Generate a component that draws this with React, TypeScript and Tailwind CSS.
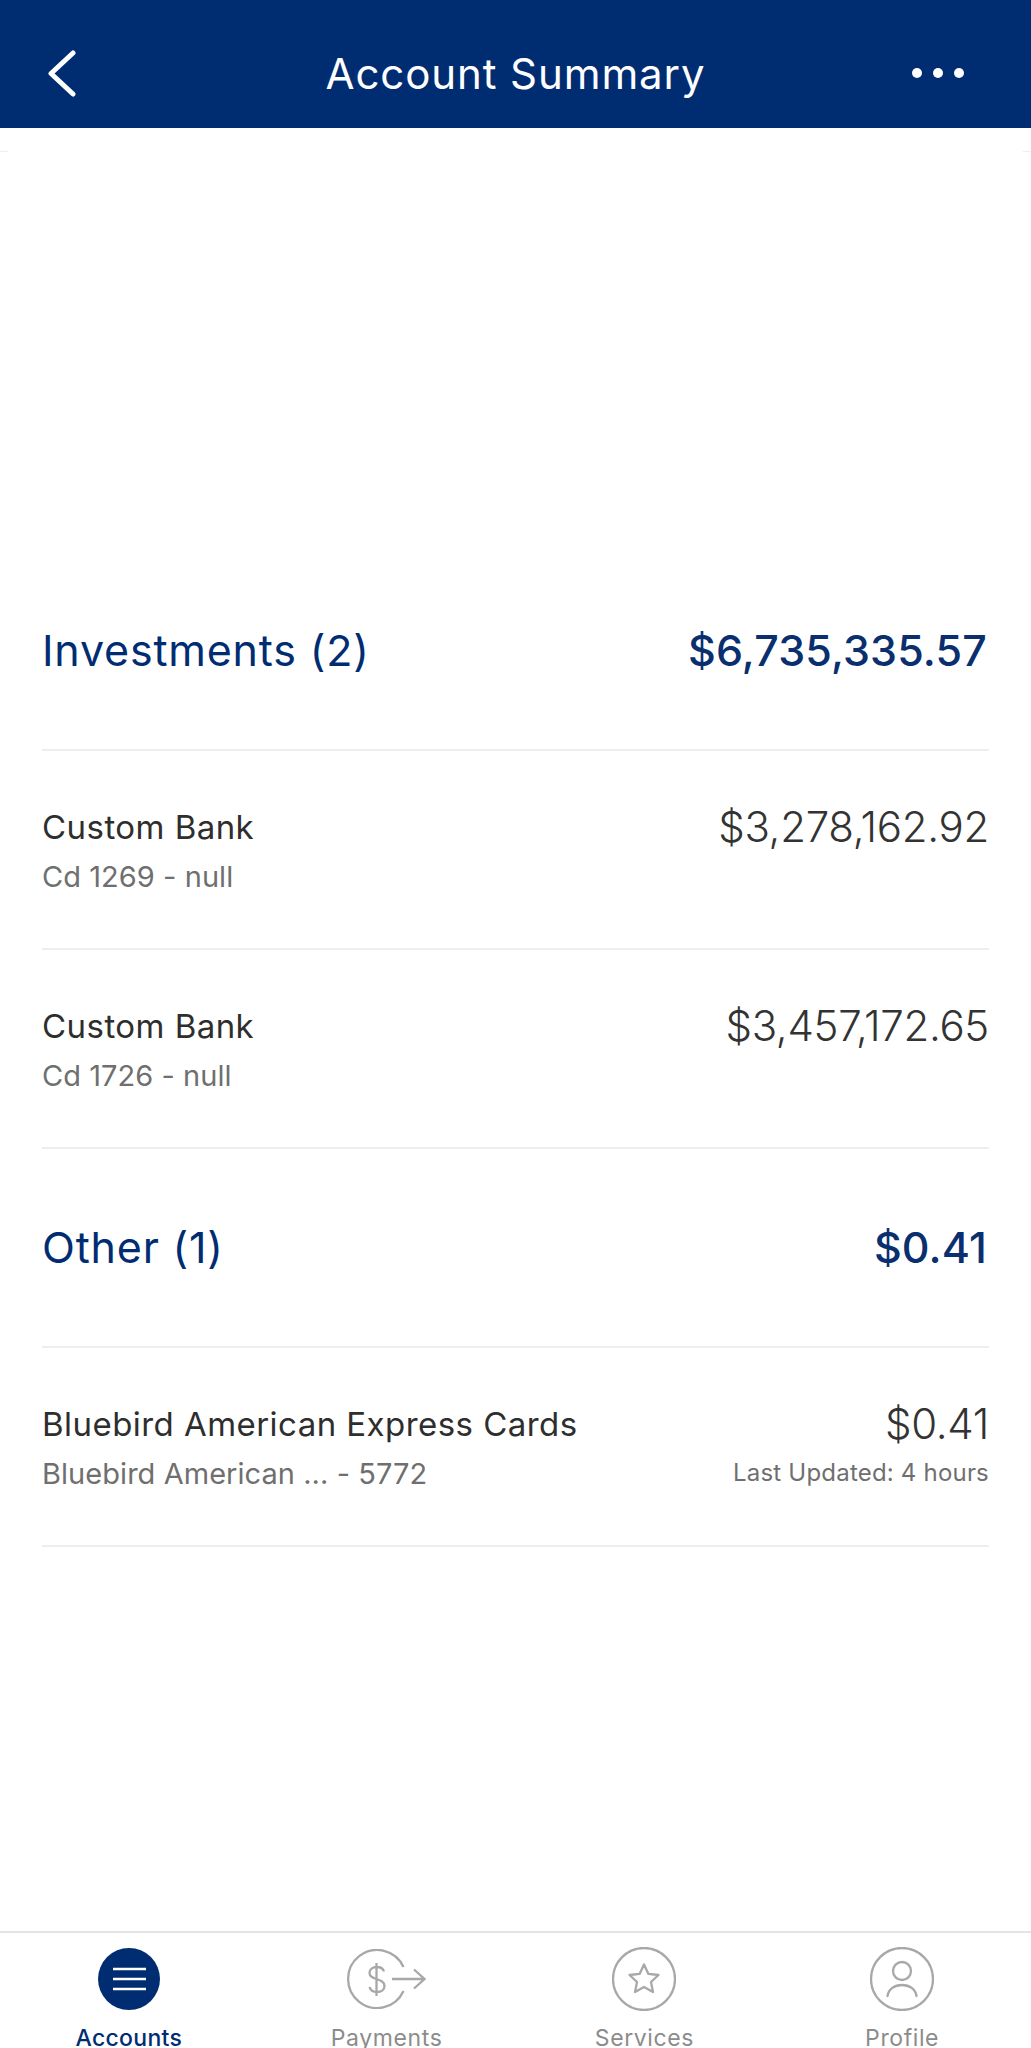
const font = "font-['Inter','Liberation_Sans',sans-serif]"

function SectionRow({ title, total }: { title: string; total: string }) {
    return (
        <div className="flex h-[199px] items-center justify-between border-b-2 border-[#eeeeee]">
            <span className="text-[43px] font-normal tracking-[0.8px] text-[#002d72]">{title}</span>
            <span className="mr-[2px] text-[43px] font-medium tracking-[0.15px] text-[#0a2f6e]">{total}</span>
        </div>
    )
}

function AccountRow({ name, sub, amount, note }: { name: string; sub: string; amount: string; note?: string }) {
    return (
        <div className="flex h-[199px] justify-between border-b-2 border-[#eeeeee] pt-[52px]">
            <div>
                <div className="text-[33px] leading-[48px] font-normal tracking-[0.45px] text-[#2e2e2e]">{name}</div>
                <div className="mt-[4px] text-[29px] leading-[44px] tracking-[0.05px] text-[#6f6f6f]">{sub}</div>
            </div>
            <div className="text-right">
                <div className="text-[42px] leading-[48px] font-light tracking-[-0.3px] text-[#333333]">{amount}</div>
                {note && <div className="mt-[3px] text-[24px] leading-[44px] tracking-[0.2px] text-[#6f6f6f]">{note}</div>}
            </div>
        </div>
    )
}

function Tab({ label, active, children }: { label: string; active?: boolean; children: React.ReactNode }) {
    return (
        <div className="flex flex-col items-center">
            <div className="flex h-[64px] items-center justify-center">{children}</div>
            <span className={`mt-[17px] text-[23px] leading-[20px] ${active ? 'font-medium tracking-[0.3px] text-[#002d72]' : 'tracking-[0.6px] text-[#8c8c8c]'}`}>
                {label}
            </span>
        </div>
    )
}

export default function App() {
    return (
        <div className={`flex h-[2048px] w-[1031px] flex-col overflow-hidden bg-white ${font}`}>
            <header className="grid h-[128px] grid-cols-[1fr_auto_1fr] items-center bg-[#002d72] px-[48px] pt-[18px] text-white">
                <svg width="28" height="47" viewBox="0 0 28 47" fill="none" stroke="white" strokeWidth="5" strokeLinecap="round" strokeLinejoin="round">
                    <path d="M25 3 3 23.5 25 44" />
                </svg>
                <h1 className="text-[42px] font-normal tracking-[0.9px]">Account Summary</h1>
                <div className="mr-[19px] flex justify-end gap-[11px]">
                    <span className="size-[10px] rounded-full bg-white" />
                    <span className="size-[10px] rounded-full bg-white" />
                    <span className="size-[10px] rounded-full bg-white" />
                </div>
            </header>

            <div className="flex h-[424px] justify-between pt-[23px]">
                <span className="h-px w-[8px] bg-[#eeeeee]" />
                <span className="h-px w-[8px] bg-[#eeeeee]" />
            </div>

            <main className="flex-1 px-[42px]">
                <SectionRow title="Investments (2)" total="$6,735,335.57" />
                <AccountRow name="Custom Bank" sub="Cd 1269 - null" amount="$3,278,162.92" />
                <AccountRow name="Custom Bank" sub="Cd 1726 - null" amount="$3,457,172.65" />
                <SectionRow title="Other (1)" total="$0.41" />
                <AccountRow
                    name="Bluebird American Express Cards"
                    sub="Bluebird American ... - 5772"
                    amount="$0.41"
                    note="Last Updated: 4 hours"
                />
            </main>

            <nav className="grid h-[117px] shrink-0 grid-cols-4 border-t-2 border-[#e4e4e4] pt-[14px]">
                <Tab label="Accounts" active>
                    <svg width="62" height="62" viewBox="0 0 62 62">
                        <circle cx="31" cy="31" r="31" fill="#002d72" />
                        <path d="M15 21h33M15 31h33M15 41h33" stroke="white" strokeWidth="2.4" />
                    </svg>
                </Tab>
                <Tab label="Payments">
                    <svg className="-ml-[2px]" width="81" height="60" viewBox="0 0 81 60" fill="none" stroke="#a8a8a8" strokeWidth="2.3">
                        <path d="M58.500 18A29 29 0 1 0 58.500 42" />
                        <path d="M47 30h32.500M69 20.500l10.500 9.500-10.500 9.500" />
                        <path d="M39 22.5c-1-3-3.5-4.500-7-4.500-4.500 0-7.500 2.500-7.500 6 0 8 15 4.500 15 13 0 3.500-3 6-7.500 6-3.500 0-6.500-1.500-7.500-5M31.500 14v33" />
                    </svg>
                </Tab>
                <Tab label="Services">
                    <svg width="64" height="64" viewBox="0 0 64 64" fill="none" stroke="#a8a8a8" strokeWidth="2.3">
                        <circle cx="32" cy="32" r="31" />
                        <path d="M32 17.500l4.300 9.300 10.200 1.200-7.500 7 2 10-9-5-9 5 2-10-7.500-7 10.200-1.200z" strokeLinejoin="round" />
                    </svg>
                </Tab>
                <Tab label="Profile">
                    <svg width="64" height="64" viewBox="0 0 64 64" fill="none" stroke="#a8a8a8" strokeWidth="2.3">
                        <circle cx="32" cy="32" r="31" />
                        <circle cx="32" cy="24" r="9" />
                        <path d="M17.500 49c1-7 7-11 14.500-11s13.500 4 14.500 11" strokeLinecap="round" />
                    </svg>
                </Tab>
            </nav>
        </div>
    )
}
